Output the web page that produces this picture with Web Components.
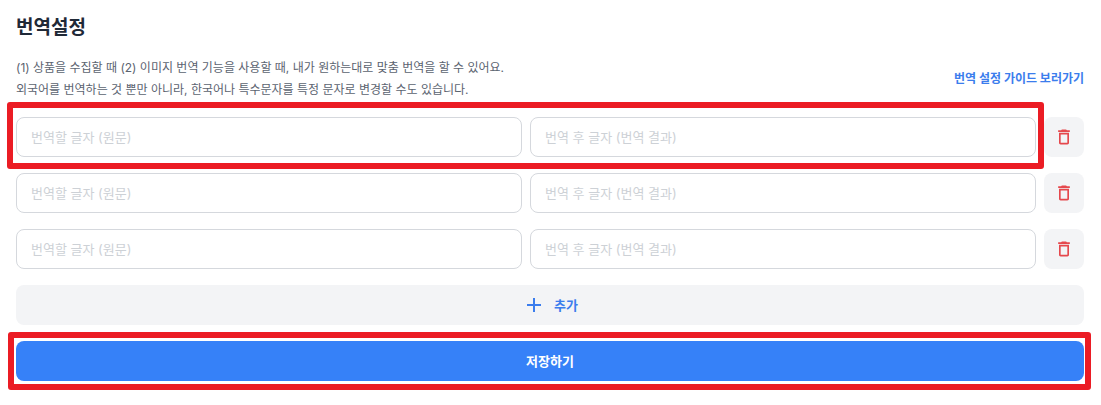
<!DOCTYPE html>
<html lang="ko">
<head>
<meta charset="utf-8">
<title>번역설정</title>
<style>
  body {
    margin: 0;
    background: #fff;
    color: #1f2937;
    font-family: Inter, "Noto Sans CJK KR", sans-serif;
    font-size: 13px;
  }
</style>
</head>
<body>
<translation-settings></translation-settings>

<script>
const define = (name, html, setup) => {
  const template = document.createElement("template");
  template.innerHTML = html;
  customElements.define(name, class extends HTMLElement {
    connectedCallback() {
      if (this.shadowRoot) return;
      this.attachShadow({ mode: "open" }).append(template.content.cloneNode(true));
      if (setup) setup(this, this.shadowRoot);
    }
  });
};

/* Red frame drawn around whatever is slotted in */
define("focus-frame", `
  <style>
    :host { display: block; position: relative; min-width: 0; }
    :host::after {
      content: "";
      position: absolute;
      inset: var(--frame-inset, -9px -7px -9px -8px);
      border: 6px solid #eb1c24;
      border-radius: 3px;
      pointer-events: none;
      z-index: 1;
    }
  </style>
  <slot></slot>`);

define("text-field", `
  <style>
    :host { display: block; min-width: 0; }
    input {
      box-sizing: border-box;
      display: block;
      width: 100%;
      height: 40px;
      margin: 0;
      padding: 0 14px;
      border: 1px solid #d5d8dd;
      border-radius: 8px;
      background: #fff;
      color: #1f2937;
      font: inherit;
      outline: none;
    }
    input::placeholder { color: #cdd1d6; opacity: 1; }
  </style>
  <input type="text">`, (host, root) => {
  const input = root.querySelector("input");
  input.placeholder = host.getAttribute("label");
  input.setAttribute("aria-label", host.getAttribute("label"));
});

define("field-pair", `
  <style>
    :host { display: grid; grid-template-columns: 1fr 1fr; gap: 8px; min-width: 0; }
  </style>
  <text-field label="번역할 글자 (원문)"></text-field>
  <text-field label="번역 후 글자 (번역 결과)"></text-field>`);

define("delete-button", `
  <style>
    :host { display: block; }
    button {
      display: flex;
      align-items: center;
      justify-content: center;
      width: 40px;
      height: 40px;
      padding: 0;
      border: 0;
      border-radius: 8px;
      background: #f3f4f6;
      color: #e5484d;
      cursor: pointer;
    }
  </style>
  <button type="button" aria-label="삭제">
    <svg width="20" height="20" viewBox="0 0 24 24" fill="currentColor" aria-hidden="true">
      <path d="M16 9v10H8V9h8m-1.500-6h-5l-1 1H5v2h14V4h-3.500l-1-1zM18 7H6v12c0 1.100.9 2 2 2h8c1.100 0 2-.9 2-2V7z"/>
    </svg>
  </button>`);

define("translation-row", `
  <style>
    :host { display: grid; grid-template-columns: 1fr 40px; gap: 8px; }
  </style>
  <slot></slot>
  <delete-button></delete-button>`);

define("wide-button", `
  <style>
    :host { display: block; }
    button {
      box-sizing: border-box;
      display: flex;
      align-items: center;
      justify-content: center;
      gap: 8px;
      width: 100%;
      height: 40px;
      padding: 0 0 1px;
      border: 0;
      border-radius: 8px;
      background: #f3f4f6;
      color: #3b7ded;
      font: inherit;
      font-weight: 700;
      cursor: pointer;
    }
    :host([primary]) button { background: #3681f8; color: #fff; }
  </style>
  <button type="button"><slot name="icon"></slot><span><slot></slot></span></button>`);

define("translation-settings", `
  <style>
    :host { display: block; padding: 17px 17px 16px 16px; }
    h1 { margin: 0 0 18px; font-size: 19px; line-height: 22px; font-weight: 700; }
    header { display: flex; align-items: center; justify-content: space-between; gap: 16px; margin-bottom: 16px; }
    p { margin: 0; font-size: 12px; line-height: 22px; color: #5b6370; }
    a { color: #3b7ded; font-size: 12px; font-weight: 700; line-height: 22px; text-decoration: none; white-space: nowrap; }
    form { display: grid; gap: 16px; }
    .framed-row { --frame-inset: -15px -8px -12px -9px; }
  </style>
  <h1>번역설정</h1>
  <header>
    <p>(1) 상품을 수집할 때 (2) 이미지 번역 기능을 사용할 때, 내가 원하는대로 맞춤 번역을 할 수 있어요.<br>외국어를 번역하는 것 뿐만 아니라, 한국어나 특수문자를 특정 문자로 변경할 수도 있습니다.</p>
    <a href="#guide">번역 설정 가이드 보러가기</a>
  </header>
  <form>
    <translation-row><focus-frame class="framed-row"><field-pair></field-pair></focus-frame></translation-row>
    <translation-row><field-pair></field-pair></translation-row>
    <translation-row><field-pair></field-pair></translation-row>
    <wide-button>
      <svg slot="icon" width="24" height="24" viewBox="0 0 24 24" fill="none" stroke="currentColor" stroke-width="2" aria-hidden="true"><path d="M12 5v14M5 12h14"/></svg>
      추가
    </wide-button>
    <focus-frame><wide-button primary>저장하기</wide-button></focus-frame>
  </form>`);
</script>
</body>
</html>
